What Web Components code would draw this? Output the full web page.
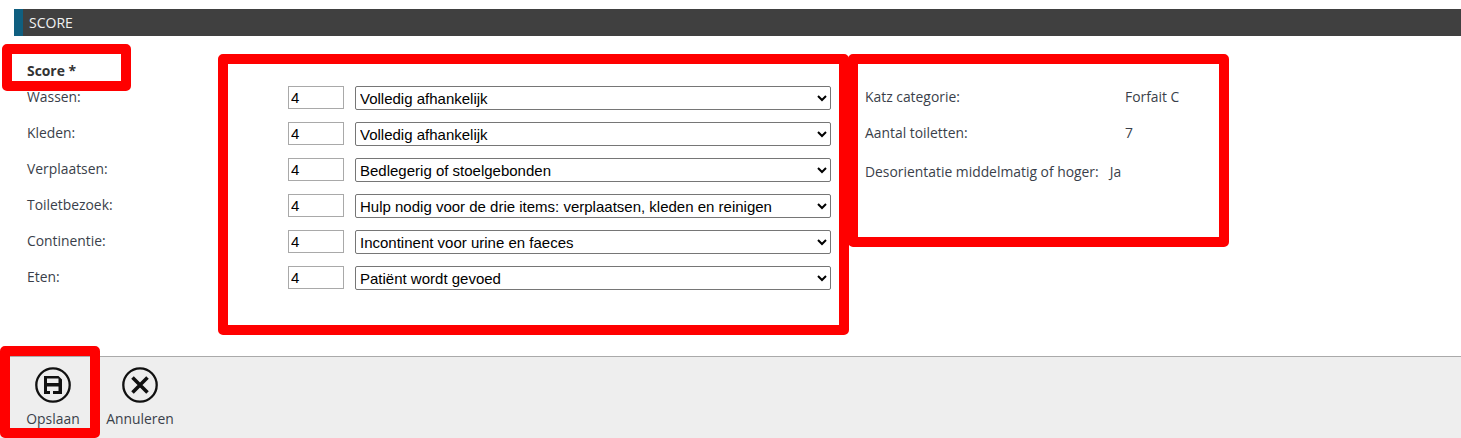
<!DOCTYPE html>
<html lang="nl">
<head>
<meta charset="utf-8">
<title>Score</title>
<style>
    html, body { margin: 0; height: 100%; }
    body {
        font-family: "Open Sans", "Noto Sans", sans-serif;
        font-size: 13.88px;
        color: #3a3f4a;
        background: #fff;
        overflow: hidden;
    }
</style>
</head>
<body>
<score-page>
    <section-bar>SCORE</section-bar>
    <score-form>
        <score-row label="Wassen:" value="Volledig afhankelijk"></score-row>
        <score-row label="Kleden:" value="Volledig afhankelijk"></score-row>
        <score-row label="Verplaatsen:" value="Bedlegerig of stoelgebonden"></score-row>
        <score-row label="Toiletbezoek:" value="Hulp nodig voor de drie items: verplaatsen, kleden en reinigen"></score-row>
        <score-row label="Continentie:" value="Incontinent voor urine en faeces"></score-row>
        <score-row label="Eten:" value="Patiënt wordt gevoed"></score-row>
        <info-row slot="side" label="Katz categorie:" value="Forfait C"></info-row>
        <info-row slot="side" label="Aantal toiletten:" value="7"></info-row>
        <info-row slot="side" label="Desorientatie middelmatig of hoger:" value="Ja" compact></info-row>
    </score-form>
    <tool-bar>
        <tool-button label="Opslaan" icon="save"></tool-button>
        <tool-button label="Annuleren" icon="cancel"></tool-button>
    </tool-bar>
    <red-mark style="left:2px;top:44px;width:129px;height:47px"></red-mark>
    <red-mark style="left:218px;top:54px;width:631px;height:281px"></red-mark>
    <red-mark style="left:848px;top:54px;width:381px;height:193px"></red-mark>
    <red-mark style="left:0;top:346px;width:100px;height:92px"></red-mark>
</score-page>

<script>
class ScorePage extends HTMLElement {
    constructor() {
        super();
        this.attachShadow({ mode: 'open' }).innerHTML = `
            <style>
                :host {
                    display: flex;
                    flex-direction: column;
                    position: relative;
                    height: 438px;
                    padding-top: 9px;
                    box-sizing: border-box;
                }
            </style>
            <slot></slot>
        `;
    }
}

class SectionBar extends HTMLElement {
    constructor() {
        super();
        this.attachShadow({ mode: 'open' }).innerHTML = `
            <style>
                :host {
                    display: block;
                    margin-left: 14px;
                    height: 27px;
                    line-height: 27px;
                    background: #404040;
                    border-left: 9px solid #0f5f80;
                    box-sizing: border-box;
                    padding-left: 6px;
                    color: #f2f2f2;
                    font-size: 14px;
                }
            </style>
            <slot></slot>
        `;
    }
}

class ScoreForm extends HTMLElement {
    constructor() {
        super();
        this.attachShadow({ mode: 'open' }).innerHTML = `
            <style>
                :host {
                    display: block;
                    flex: 1;
                    padding: 25px 0 0 27px;
                }
                h2 {
                    margin: 0;
                    font-size: 13.88px;
                    line-height: 20px;
                    font-weight: 700;
                    color: #333;
                }
                .cols {
                    display: flex;
                    margin-top: 5px;
                }
                .rows { width: 804px; }
                .side { margin-left: 34px; }
            </style>
            <h2>Score *</h2>
            <div class="cols">
                <div class="rows"><slot></slot></div>
                <div class="side"><slot name="side"></slot></div>
            </div>
        `;
    }
}

class ScoreRow extends HTMLElement {
    constructor() {
        super();
        const value = this.getAttribute('value');
        this.attachShadow({ mode: 'open' }).innerHTML = `
            <style>
                :host {
                    display: flex;
                    align-items: flex-start;
                    height: 36px;
                }
                label { width: 261px; line-height: 22px; }
                input, select {
                    box-sizing: border-box;
                    font-family: "Liberation Sans", Arial, sans-serif;
                    font-size: 15px;
                    color: #000;
                    background: #fff;
                    margin: 0;
                }
                input {
                    width: 56px;
                    height: 23px;
                    border: 1px solid #a9a9a9;
                    padding: 0 2px;
                    outline: none;
                }
                select {
                    width: 476px;
                    height: 24px;
                    margin-left: 11px;
                    border: 1px solid #767676;
                    border-radius: 2px;
                }
            </style>
            <label>${this.getAttribute('label')}</label>
            <input type="text" value="4">
            <select><option>${value}</option></select>
        `;
    }
}

class InfoRow extends HTMLElement {
    constructor() {
        super();
        const compact = this.hasAttribute('compact');
        this.attachShadow({ mode: 'open' }).innerHTML = `
            <style>
                :host {
                    display: flex;
                    height: 36px;
                    line-height: 22px;
                    ${compact ? 'padding-top: 3px;' : ''}
                }
                .label { ${compact ? 'margin-right: 11px;' : 'width: 260px;'} }
            </style>
            <span class="label">${this.getAttribute('label')}</span>
            <span>${this.getAttribute('value')}</span>
        `;
    }
}

class ToolBar extends HTMLElement {
    constructor() {
        super();
        this.attachShadow({ mode: 'open' }).innerHTML = `
            <style>
                :host {
                    display: flex;
                    gap: 9px;
                    height: 82px;
                    box-sizing: border-box;
                    background: #eeeeee;
                    border-top: 1px solid #aaaaaa;
                    padding-left: 14px;
                }
            </style>
            <slot></slot>
        `;
    }
}

const icons = {
    save: `<circle cx="19" cy="19" r="16.7"/>
           <path fill-rule="evenodd" fill="#111" stroke="none"
                 d="M10 10h14.5l3.5 3.5V28H10zM13 12.5V17h11.5v-4.5zM13 20.5V25h3v3h3v-3h5.5v-4.5z"/>`,
    cancel: `<circle cx="19" cy="19" r="16.7"/>
             <path d="M11.5 11.5l15 15M26.5 11.5l-15 15" stroke-width="3.6"/>`
};

class ToolButton extends HTMLElement {
    constructor() {
        super();
        this.attachShadow({ mode: 'open' }).innerHTML = `
            <style>
                :host {
                    display: flex;
                    flex-direction: column;
                    align-items: center;
                    width: 78px;
                    padding-top: 9px;
                }
                svg { display: block; }
                span { margin-top: 5px; line-height: 20px; white-space: nowrap; }
            </style>
            <svg width="38" height="38" viewBox="0 0 38 38" fill="none" stroke="#111" stroke-width="2.3">${icons[this.getAttribute('icon')]}</svg>
            <span>${this.getAttribute('label')}</span>
        `;
    }
}

// annotation rectangles that lie over the page
class RedMark extends HTMLElement {
    constructor() {
        super();
        this.attachShadow({ mode: 'open' }).innerHTML = `
            <style>
                :host {
                    position: absolute;
                    box-sizing: border-box;
                    border: 10px solid #ff0000;
                    border-radius: 5px;
                    pointer-events: none;
                }
            </style>
        `;
    }
}

customElements.define('score-page', ScorePage);
customElements.define('section-bar', SectionBar);
customElements.define('score-form', ScoreForm);
customElements.define('score-row', ScoreRow);
customElements.define('info-row', InfoRow);
customElements.define('tool-bar', ToolBar);
customElements.define('tool-button', ToolButton);
customElements.define('red-mark', RedMark);
</script>
</body>
</html>
